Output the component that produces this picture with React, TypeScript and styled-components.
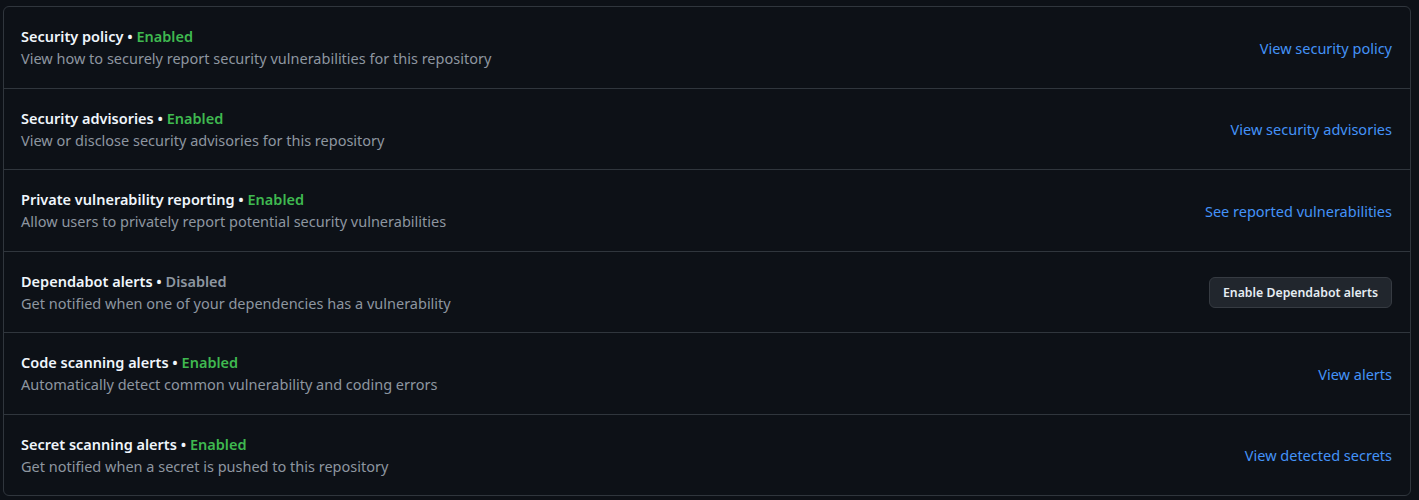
import styled, { createGlobalStyle } from 'styled-components'

const GlobalStyle = createGlobalStyle`
  body {
    margin: 0;
    background: #0d1117;
    font-family: "Noto Sans", "Segoe UI", "Liberation Sans", sans-serif;
    color: #e6edf3;
  }
`

const Page = styled.div`
  padding: 6px 8px 4px 3px;
`

const Box = styled.div`
  border: 1px solid #30363d;
  border-radius: 6px;
  background: #0d1117;
`

const Row = styled.div`
  display: flex;
  align-items: center;
  justify-content: space-between;
  padding: 18px 18px 17.5px 17px;
  border-top: 1px solid #30363d;

  &:first-child {
    border-top: none;
  }
`

const Info = styled.div`
  display: flex;
  flex-direction: column;
`

const Title = styled.div`
  font-size: 14.5px;
  font-weight: 600;
  line-height: 22px;
  color: #f0f6fc;
`

const Status = styled.span<{ $enabled: boolean }>`
  color: ${(p) => (p.$enabled ? '#3fb950' : '#8d96a0')};
`

const Description = styled.div`
  font-size: 14.5px;
  line-height: 23px;
  color: #8d96a0;
`

const Link = styled.a`
  font-size: 14.5px;
  color: #4493f8;
  text-decoration: none;
  cursor: pointer;
`

const Button = styled.button`
  font-family: inherit;
  font-size: 12.3px;
  font-weight: 600;
  color: #e6edf3;
  background: #21262d;
  border: 1px solid #363b42;
  border-radius: 6px;
  height: 31px;
  padding: 0 13px;
  cursor: pointer;
`

interface Feature {
  title: string
  enabled: boolean
  description: string
  action: string
  button?: boolean
}

const features: Feature[] = [
  {
    title: 'Security policy',
    enabled: true,
    description: 'View how to securely report security vulnerabilities for this repository',
    action: 'View security policy',
  },
  {
    title: 'Security advisories',
    enabled: true,
    description: 'View or disclose security advisories for this repository',
    action: 'View security advisories',
  },
  {
    title: 'Private vulnerability reporting',
    enabled: true,
    description: 'Allow users to privately report potential security vulnerabilities',
    action: 'See reported vulnerabilities',
  },
  {
    title: 'Dependabot alerts',
    enabled: false,
    description: 'Get notified when one of your dependencies has a vulnerability',
    action: 'Enable Dependabot alerts',
    button: true,
  },
  {
    title: 'Code scanning alerts',
    enabled: true,
    description: 'Automatically detect common vulnerability and coding errors',
    action: 'View alerts',
  },
  {
    title: 'Secret scanning alerts',
    enabled: true,
    description: 'Get notified when a secret is pushed to this repository',
    action: 'View detected secrets',
  },
]

export default function App() {
  return (
    <>
      <GlobalStyle />
      <Page>
        <Box>
          {features.map((f) => (
            <Row key={f.title}>
              <Info>
                <Title>
                  {f.title} •{' '}
                  <Status $enabled={f.enabled}>{f.enabled ? 'Enabled' : 'Disabled'}</Status>
                </Title>
                <Description>{f.description}</Description>
              </Info>
              {f.button ? <Button>{f.action}</Button> : <Link>{f.action}</Link>}
            </Row>
          ))}
        </Box>
      </Page>
    </>
  )
}
